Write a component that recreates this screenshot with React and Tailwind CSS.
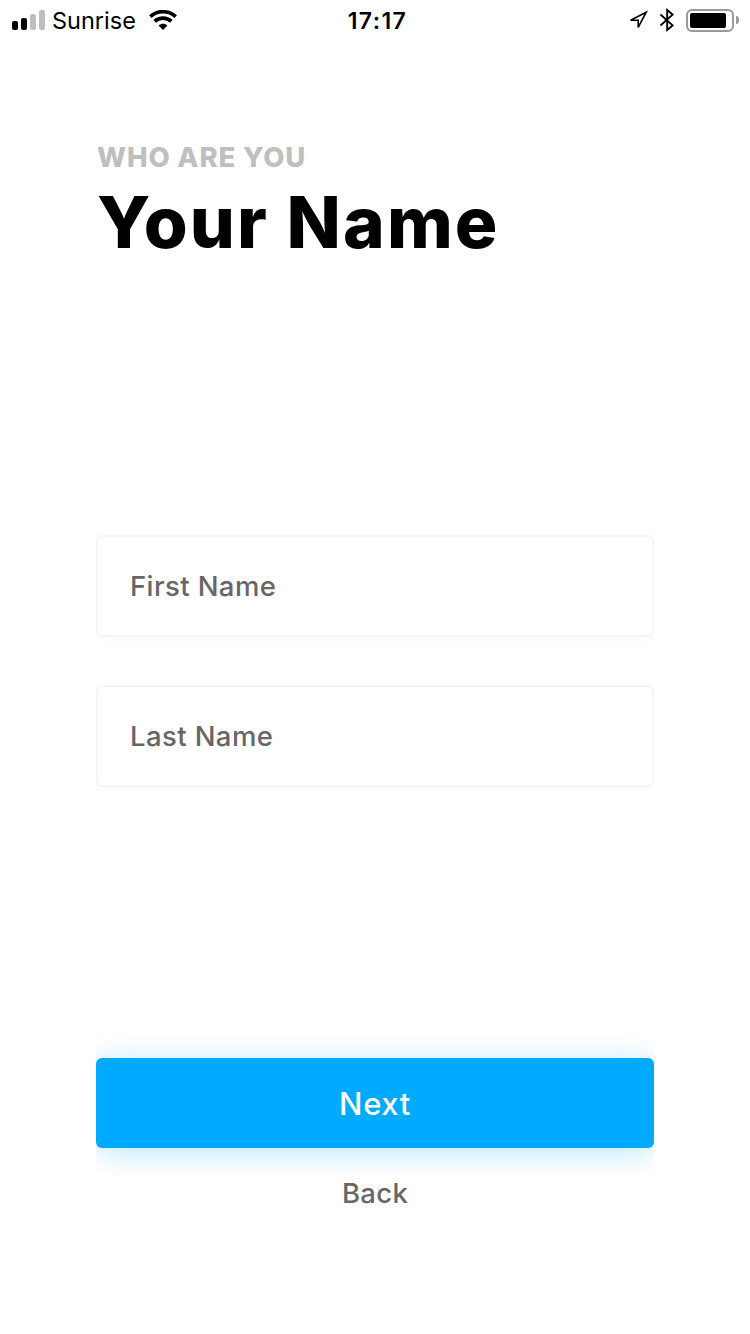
import React from "react";

function SignalBars() {
  return (
    <div className="flex h-5 w-[33px] items-end gap-[3px]">
      <span className="h-[9px] w-[6px] rounded-[2px] bg-black" />
      <span className="h-3 w-[6px] rounded-[2px] bg-black" />
      <span className="h-4 w-[6px] rounded-[2px] bg-[#bfbfbf]" />
      <span className="h-5 w-[6px] rounded-[2px] bg-[#bfbfbf]" />
    </div>
  );
}

function WifiIcon() {
  return (
    <svg width="28" height="20" viewBox="0 0 28 20" fill="none" stroke="#000" strokeWidth="3.7">
      <path d="M1.3 6.6C8.4 0.1 19.6 0.1 26.7 6.6" />
      <path d="M5.7 11.4C10.4 7.1 17.6 7.1 22.3 11.4" />
      <path d="M14 20L9.6 15.6C12.2 13.2 15.8 13.2 18.4 15.6Z" fill="#000" stroke="none" />
    </svg>
  );
}

function StatusBar() {
  return (
    <header className="grid h-10 grid-cols-[1fr_auto_1fr] items-center pl-3 pr-[11px]">
      <div className="flex items-center">
        <SignalBars />
        <span className="ml-[7px] w-[97px] whitespace-nowrap pt-0.5 text-[23.5px] leading-[38px]">Sunrise</span>
        <WifiIcon />
      </div>
      <span className="pl-1 pt-0.5 text-[23px] font-semibold leading-[38px] tracking-[1.4px]">17:17</span>
      <div className="flex items-center justify-end">
        <svg width="20" height="20" viewBox="0 0 20 20" fill="none" stroke="#000" strokeWidth="1.6">
          <path d="M18.2 2.2L2.6 10.2H10.2V17.4Z" />
        </svg>
        <svg className="ml-[11px]" width="16" height="24" viewBox="0 0 16 24" fill="none" stroke="#000" strokeWidth="1.9">
          <path d="M1.5 6.5L13.6 17.4L8.2 22V2L13.6 6.6L1.5 17.5" />
        </svg>
        <div className="ml-[11px] h-[23px] w-12 rounded-[6px] border-2 border-[#999] p-0.5">
          <div className="h-[15px] w-9 rounded-[2px] bg-black" />
        </div>
        <span className="ml-0.5 h-2 w-[3px] rounded-r-full bg-[#999]" />
      </div>
    </header>
  );
}

function Field({ label }) {
  return (
    <div className="flex h-[102px] items-center rounded-[6px] border-2 border-[#f5f5f5] bg-white px-8 pt-0.5 text-[27.5px] font-medium tracking-[0.4px] text-[#666] shadow-[0_4px_4px_rgba(0,0,0,0.015)]">
      {label}
    </div>
  );
}

export default function App() {
  return (
    <div className="flex h-[1334px] w-[750px] flex-col bg-white font-['Inter',sans-serif] text-black">
      <StatusBar />
      <main className="flex flex-1 flex-col px-24">
        <p className="ml-px mt-[101px] h-8 text-[27.5px] font-extrabold leading-8 tracking-[0.85px] text-[#bfbfbf]">WHO ARE YOU</p>
        <h1 className="ml-px mt-[7px] h-[84px] whitespace-nowrap text-[71px] font-extrabold leading-[84px] tracking-[2.1px]">Your Name</h1>
        <div className="mt-[271px] flex flex-col gap-12">
          <Field label="First Name" />
          <Field label="Last Name" />
        </div>
        <div className="mt-[231px] overflow-hidden pb-7 pt-10">
          <button className="block h-[90px] w-full rounded-[6px] bg-[#00aaff] pt-0.5 text-[31px] font-[550] leading-[88px] tracking-[0.6px] text-white shadow-[0_4px_32px_rgba(0,170,255,0.28)]">
            Next
          </button>
        </div>
        <button className="-mt-px h-9 text-[27.5px] font-[550] leading-9 tracking-[0.3px] text-[#666]">Back</button>
      </main>
    </div>
  );
}
